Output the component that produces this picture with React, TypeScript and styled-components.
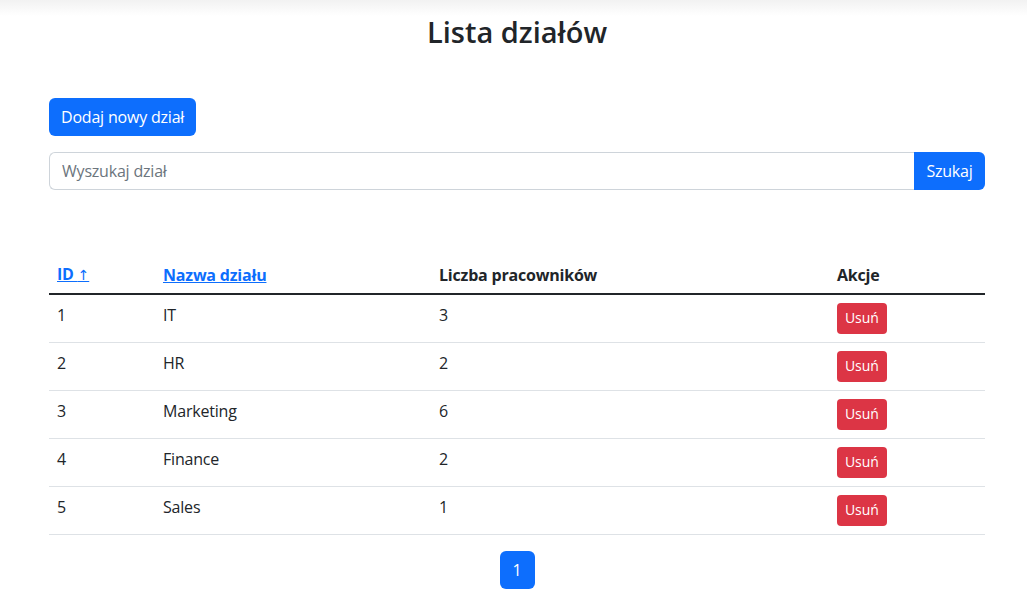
import styled, { createGlobalStyle } from "styled-components";

const departments = [
    { id: 1, name: "IT", count: 3 },
    { id: 2, name: "HR", count: 2 },
    { id: 3, name: "Marketing", count: 6 },
    { id: 4, name: "Finance", count: 2 },
    { id: 5, name: "Sales", count: 1 },
];

function App() {
    return (
        <Page>
            <GlobalStyle />
            <Container>
                <Title>Lista działów</Title>
                <PrimaryButton>Dodaj nowy dział</PrimaryButton>
                <SearchGroup>
                    <SearchInput placeholder="Wyszukaj dział" />
                    <SearchButton>Szukaj</SearchButton>
                </SearchGroup>
                <Table>
                    <colgroup>
                        <col style={{ width: 106 }} />
                        <col style={{ width: 276 }} />
                        <col style={{ width: 398 }} />
                        <col style={{ width: 156 }} />
                    </colgroup>
                    <thead>
                        <tr>
                            <Th>
                                <SortLink href="#">
                                    ID <Arrow>↑</Arrow>
                                </SortLink>
                            </Th>
                            <Th>
                                <SortLink href="#">Nazwa działu</SortLink>
                            </Th>
                            <Th>Liczba pracowników</Th>
                            <Th>Akcje</Th>
                        </tr>
                    </thead>
                    <tbody>
                        {departments.map(d => (
                            <tr key={d.id}>
                                <Td>{d.id}</Td>
                                <Td>{d.name}</Td>
                                <Td>{d.count}</Td>
                                <Td>
                                    <DangerButton>Usuń</DangerButton>
                                </Td>
                            </tr>
                        ))}
                    </tbody>
                </Table>
                <Pagination>
                    <PageItem>1</PageItem>
                </Pagination>
            </Container>
        </Page>
    );
}

export default App;

const GlobalStyle = createGlobalStyle`
    * {
        box-sizing: border-box;
    }
    body {
        margin: 0;
        font-family: "Open Sans", "Noto Sans", sans-serif;
        font-size: 16px;
        line-height: 1.5;
        letter-spacing: -0.2px;
        color: #212529;
        background: #fff;
    }
`;

const Page = styled.div`
    min-height: 608px;
    background: linear-gradient(#f2f2f2 0px, #ffffff 16px);
`;

const Container = styled.div`
    width: 936px;
    margin: 0 0 0 49px;
    padding-top: 3px;
    display: flex;
    flex-direction: column;
    align-items: flex-start;
`;

const Title = styled.h2`
    align-self: stretch;
    text-align: center;
    margin: 12px 0 48px;
    font-size: 29px;
    font-weight: 600;
    line-height: 1.2;
    letter-spacing: 0;
`;

const PrimaryButton = styled.button`
    height: 38px;
    padding: 0 12px;
    border: none;
    border-radius: 6px;
    background: #0d6efd;
    color: #fff;
    font: inherit;
    letter-spacing: inherit;
    cursor: pointer;
`;

const SearchGroup = styled.div`
    display: flex;
    align-self: stretch;
    margin-top: 16px;
`;

const SearchInput = styled.input`
    flex: 1;
    height: 38px;
    padding: 0 12px;
    border: 1px solid #ced4da;
    border-right: none;
    border-radius: 6px 0 0 6px;
    font: inherit;
    letter-spacing: inherit;
    color: #212529;
    outline: none;

    &::placeholder {
        color: #6c757d;
    }
`;

const SearchButton = styled.button`
    width: 71px;
    height: 38px;
    border: none;
    border-radius: 0 6px 6px 0;
    background: #0d6efd;
    color: #fff;
    font: inherit;
    letter-spacing: inherit;
`;

const Table = styled.table`
    width: 936px;
    margin-top: 62px;
    border-collapse: collapse;
    table-layout: fixed;
    vertical-align: top;
`;

const Th = styled.th`
    text-align: left;
    font-weight: 700;
    padding: 10px 8px 6px;
    line-height: 24px;
    border-bottom: 2px solid #212529;
    vertical-align: bottom;
`;

const SortLink = styled.a`
    color: #0d6efd;
    text-decoration: underline;
`;

const Arrow = styled.span`
    font-family: "DejaVu Sans", sans-serif;
    font-weight: 400;
    font-size: 14px;
`;

const Td = styled.td`
    padding: 8px;
    height: 48px;
    border-bottom: 1px solid #dee2e6;
    vertical-align: top;
    line-height: 24px;
`;

const DangerButton = styled.button`
    height: 31px;
    padding: 0 8px;
    border: none;
    border-radius: 4px;
    background: #dc3545;
    color: #fff;
    font: inherit;
    font-size: 14px;
    letter-spacing: -0.1px;
`;

const Pagination = styled.div`
    align-self: stretch;
    display: flex;
    justify-content: center;
    margin-top: 16px;
`;

const PageItem = styled.span`
    display: flex;
    align-items: center;
    justify-content: center;
    width: 35px;
    height: 38px;
    border-radius: 6px;
    background: #0d6efd;
    color: #fff;
`;
